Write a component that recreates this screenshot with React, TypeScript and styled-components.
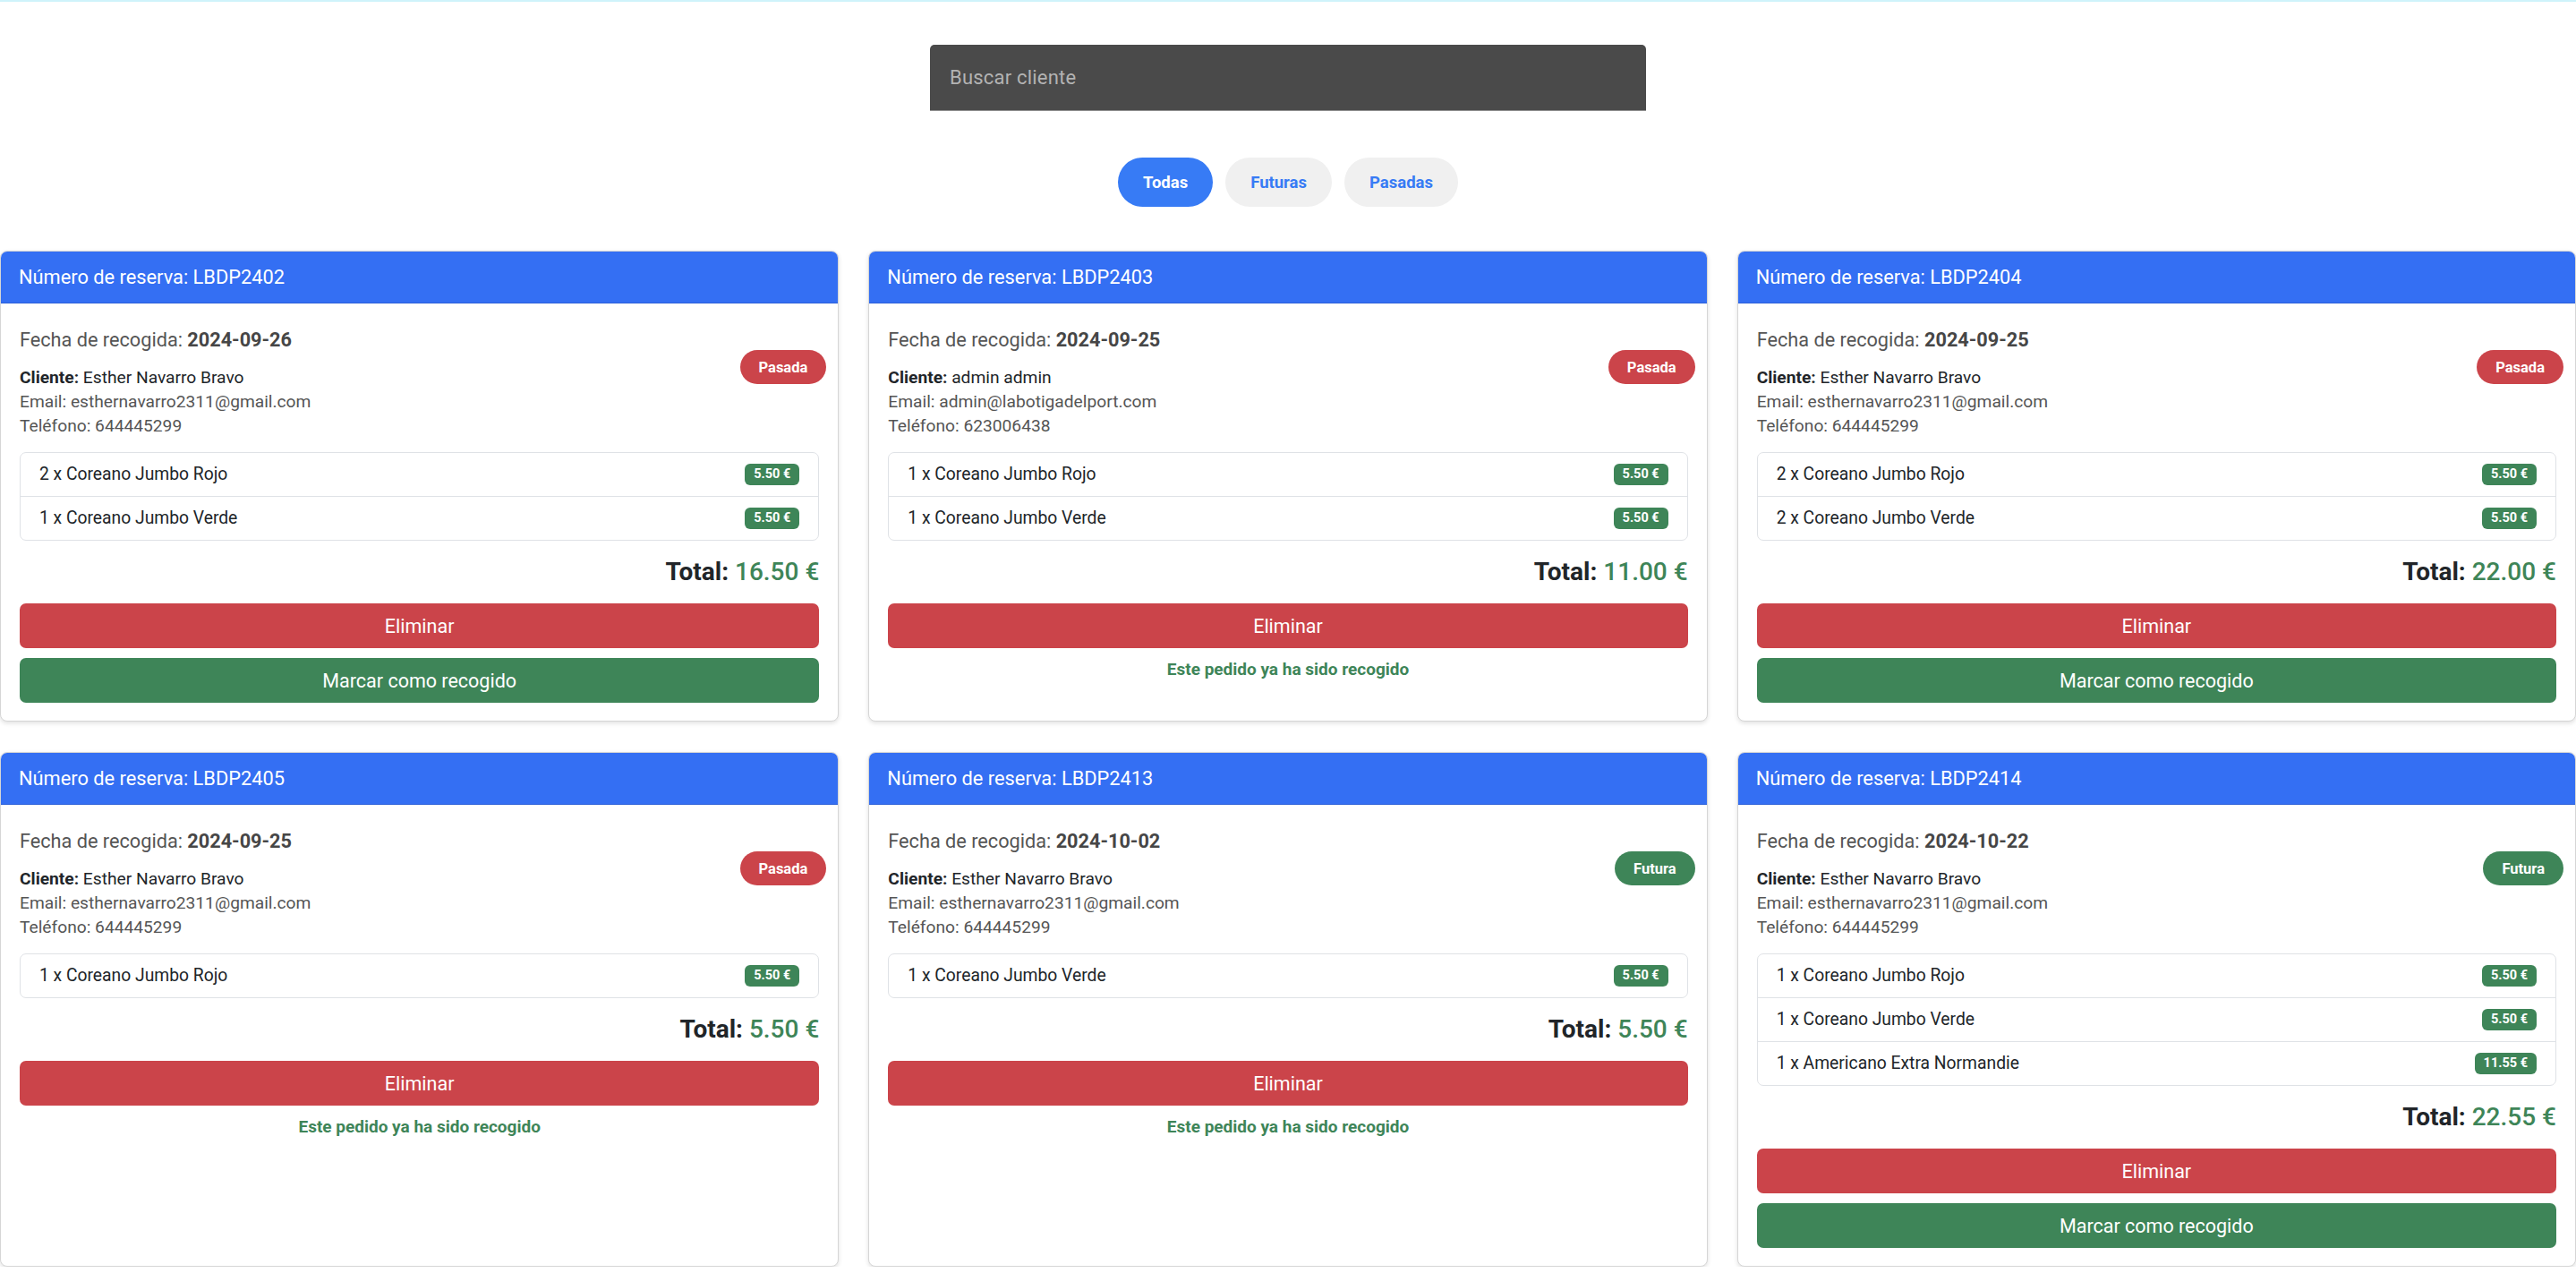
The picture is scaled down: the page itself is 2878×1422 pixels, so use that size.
import * as React from "react";
import styled, { createGlobalStyle } from "styled-components";

const GlobalStyle = createGlobalStyle`
  html, body {
    margin: 0;
    padding: 0;
    background: #ffffff;
    font-family: Roboto, "Liberation Sans", Arial, sans-serif;
  }
  * {
    box-sizing: border-box;
  }
`;

interface Item {
  label: string;
  price: string;
}

interface Reserva {
  id: string;
  date: string;
  client: string;
  email: string;
  phone: string;
  status: "Pasada" | "Futura";
  items: Item[];
  total: string;
  collected: boolean;
}

const reservas: Reserva[] = [
  {
    id: "LBDP2402",
    date: "2024-09-26",
    client: "Esther Navarro Bravo",
    email: "esthernavarro2311@gmail.com",
    phone: "644445299",
    status: "Pasada",
    items: [
      { label: "2 x Coreano Jumbo Rojo", price: "5.50 €" },
      { label: "1 x Coreano Jumbo Verde", price: "5.50 €" },
    ],
    total: "16.50 €",
    collected: false,
  },
  {
    id: "LBDP2403",
    date: "2024-09-25",
    client: "admin admin",
    email: "admin@labotigadelport.com",
    phone: "623006438",
    status: "Pasada",
    items: [
      { label: "1 x Coreano Jumbo Rojo", price: "5.50 €" },
      { label: "1 x Coreano Jumbo Verde", price: "5.50 €" },
    ],
    total: "11.00 €",
    collected: true,
  },
  {
    id: "LBDP2404",
    date: "2024-09-25",
    client: "Esther Navarro Bravo",
    email: "esthernavarro2311@gmail.com",
    phone: "644445299",
    status: "Pasada",
    items: [
      { label: "2 x Coreano Jumbo Rojo", price: "5.50 €" },
      { label: "2 x Coreano Jumbo Verde", price: "5.50 €" },
    ],
    total: "22.00 €",
    collected: false,
  },
  {
    id: "LBDP2405",
    date: "2024-09-25",
    client: "Esther Navarro Bravo",
    email: "esthernavarro2311@gmail.com",
    phone: "644445299",
    status: "Pasada",
    items: [{ label: "1 x Coreano Jumbo Rojo", price: "5.50 €" }],
    total: "5.50 €",
    collected: true,
  },
  {
    id: "LBDP2413",
    date: "2024-10-02",
    client: "Esther Navarro Bravo",
    email: "esthernavarro2311@gmail.com",
    phone: "644445299",
    status: "Futura",
    items: [{ label: "1 x Coreano Jumbo Verde", price: "5.50 €" }],
    total: "5.50 €",
    collected: true,
  },
  {
    id: "LBDP2414",
    date: "2024-10-22",
    client: "Esther Navarro Bravo",
    email: "esthernavarro2311@gmail.com",
    phone: "644445299",
    status: "Futura",
    items: [
      { label: "1 x Coreano Jumbo Rojo", price: "5.50 €" },
      { label: "1 x Coreano Jumbo Verde", price: "5.50 €" },
      { label: "1 x Americano Extra Normandie", price: "11.55 €" },
    ],
    total: "22.55 €",
    collected: false,
  },
];

const RED = "#cb444a";
const GREEN = "#3e8558";
const BLUE = "#346ff3";

const Page = styled.div`
  border-top: 2px solid #cff3fb;
  padding-top: 48px;
  display: flex;
  flex-direction: column;
  align-items: center;
`;

const SearchField = styled.input`
  width: 800px;
  height: 74px;
  padding: 0 22px;
  border: none;
  border-bottom: 1px solid #8e8e8e;
  border-radius: 5px 5px 0 0;
  background: #4a4a4a;
  color: #ffffff;
  font-family: Roboto, "Liberation Sans", Arial, sans-serif;
  font-size: 22px;
  letter-spacing: 0.2px;
  outline: none;

  &::placeholder {
    color: #b3b3b3;
  }
`;

const Filters = styled.div`
  display: flex;
  gap: 14px;
  margin-top: 52px;
`;

interface PillProps {
  $active?: boolean;
}

const FilterPill = styled.button<PillProps>`
  height: 55px;
  padding: 0 28px;
  border: none;
  border-radius: 28px;
  background: ${(p) => (p.$active ? "#377bf5" : "#f0f0f0")};
  color: ${(p) => (p.$active ? "#ffffff" : "#377bf5")};
  font-family: Roboto, "Liberation Sans", Arial, sans-serif;
  font-size: 18.5px;
  font-weight: 700;
  cursor: pointer;
`;

const Grid = styled.div`
  align-self: stretch;
  display: grid;
  grid-template-columns: repeat(3, 1fr);
  column-gap: 33px;
  row-gap: 34px;
  margin-top: 49px;
`;

const Card = styled.div`
  display: flex;
  flex-direction: column;
  border: 1px solid #d6d6d6;
  border-radius: 8px;
  box-shadow: 0 2px 5px rgba(0, 0, 0, 0.12);
  overflow: hidden;
  background: #ffffff;
`;

const CardHeader = styled.div`
  height: 58px;
  padding: 0 20px;
  display: flex;
  align-items: center;
  background: ${BLUE};
  border-bottom: 1px solid #2b5fd8;
  color: #ffffff;
  font-size: 21.8px;
`;

const CardBody = styled.div`
  position: relative;
  flex: 1;
  padding: 24px 21px 20px;
  display: flex;
  flex-direction: column;
`;

const DateLine = styled.div`
  font-size: 21.7px;
  line-height: 33px;
  color: #555555;
  margin-bottom: 12px;

  strong {
    color: #464646;
    font-weight: 700;
  }
`;

const InfoLine = styled.div`
  font-size: 19.2px;
  line-height: 27px;
  color: #555555;
`;

const ClientLine = styled(InfoLine)`
  color: #212529;

  strong {
    font-weight: 700;
  }
`;

interface StatusProps {
  $status: "Pasada" | "Futura";
}

const StatusBadge = styled.span<StatusProps>`
  position: absolute;
  top: 52px;
  right: 13px;
  height: 38px;
  padding: 0 21px;
  display: flex;
  align-items: center;
  border-radius: 19px;
  background: ${(p) => (p.$status === "Pasada" ? RED : GREEN)};
  color: #ffffff;
  font-size: 16.5px;
  font-weight: 700;
`;

const ItemList = styled.ul`
  list-style: none;
  margin: 16px 0 0;
  padding: 0;
  border: 1px solid #dfe2e6;
  border-radius: 7px;
`;

const ItemRow = styled.li`
  display: flex;
  align-items: center;
  justify-content: space-between;
  padding: 10px 21px;
  font-size: 19.3px;
  line-height: 28px;
  color: #212529;

  & + & {
    border-top: 1px solid #dfe2e6;
  }
`;

const PriceTag = styled.span`
  height: 24px;
  padding: 0 10px;
  display: flex;
  align-items: center;
  border-radius: 6px;
  background: ${GREEN};
  color: #ffffff;
  font-size: 14.5px;
  font-weight: 700;
`;

const TotalLine = styled.div`
  margin-top: 18px;
  text-align: right;
  font-size: 28px;
  line-height: 34px;
  font-weight: 700;
  color: #212529;

  span {
    font-weight: 500;
    color: ${GREEN};
  }
`;

const Actions = styled.div`
  margin-top: 18px;
  display: flex;
  flex-direction: column;
  gap: 11px;
`;

interface ActionProps {
  $variant: "danger" | "success";
}

const ActionButton = styled.button<ActionProps>`
  height: 50px;
  border: none;
  border-radius: 7px;
  background: ${(p) => (p.$variant === "danger" ? RED : GREEN)};
  color: #ffffff;
  font-family: Roboto, "Liberation Sans", Arial, sans-serif;
  font-size: 21.5px;
  cursor: pointer;
`;

const CollectedNote = styled.div`
  text-align: center;
  font-size: 19px;
  line-height: 26px;
  font-weight: 700;
  color: ${GREEN};
`;

const ReservaCard = ({ reserva }: { reserva: Reserva }) => (
  <Card>
    <CardHeader>Número de reserva: {reserva.id}</CardHeader>
    <CardBody>
      <DateLine>
        Fecha de recogida: <strong>{reserva.date}</strong>
      </DateLine>
      <StatusBadge $status={reserva.status}>{reserva.status}</StatusBadge>
      <ClientLine>
        <strong>Cliente:</strong> {reserva.client}
      </ClientLine>
      <InfoLine>Email: {reserva.email}</InfoLine>
      <InfoLine>Teléfono: {reserva.phone}</InfoLine>
      <ItemList>
        {reserva.items.map((item, i) => (
          <ItemRow key={i}>
            {item.label}
            <PriceTag>{item.price}</PriceTag>
          </ItemRow>
        ))}
      </ItemList>
      <TotalLine>
        Total: <span>{reserva.total}</span>
      </TotalLine>
      <Actions>
        <ActionButton $variant="danger">Eliminar</ActionButton>
        {reserva.collected ? (
          <CollectedNote>Este pedido ya ha sido recogido</CollectedNote>
        ) : (
          <ActionButton $variant="success">Marcar como recogido</ActionButton>
        )}
      </Actions>
    </CardBody>
  </Card>
);

const App = () => (
  <>
    <GlobalStyle />
    <Page>
      <SearchField placeholder="Buscar cliente" />
      <Filters>
        <FilterPill $active>Todas</FilterPill>
        <FilterPill>Futuras</FilterPill>
        <FilterPill>Pasadas</FilterPill>
      </Filters>
      <Grid>
        {reservas.map((r) => (
          <ReservaCard key={r.id} reserva={r} />
        ))}
      </Grid>
    </Page>
  </>
);

export default App;
